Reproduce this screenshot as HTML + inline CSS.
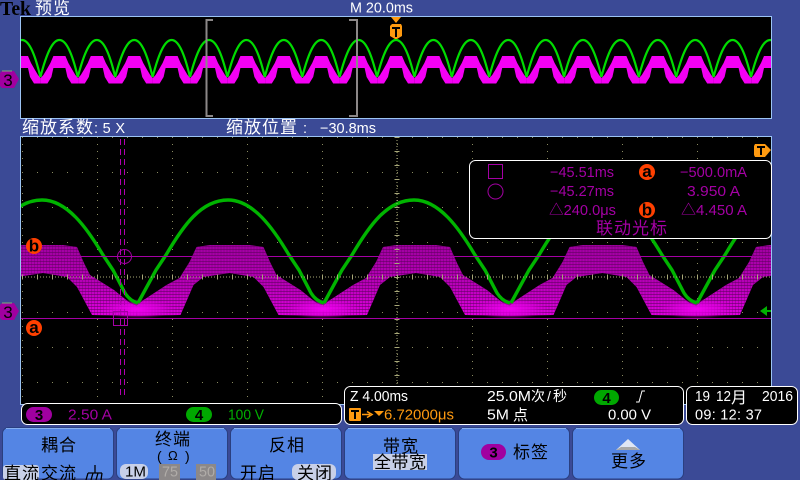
<!DOCTYPE html>
<html><head><meta charset="utf-8"><style>
html,body{margin:0;padding:0;background:#3b4a96;width:800px;height:480px;overflow:hidden}
svg{display:block}
text{font-family:"Liberation Sans","WenQuanYi Zen Hei","Noto Sans CJK SC",sans-serif;font-size:14.5px}
.w{fill:#fff}.p{fill:#a400a4}.k{fill:#000}.o{fill:#ff9a10}.g{fill:#00b000}
.c{font-size:17px;fill:#000}
.cw{font-size:17px;fill:#fff}
.n{font-size:15px;fill:#000}
.m{font-size:17px;fill:#000;font-weight:bold}
</style></head><body>
<svg width="800" height="480" viewBox="0 0 800 480" xmlns="http://www.w3.org/2000/svg">
<defs>
<pattern id="mp" width="3" height="3" patternUnits="userSpaceOnUse">
<rect width="3" height="1" fill="#5a005a" fill-opacity=".55"/><rect width="1" height="3" fill="#5a005a" fill-opacity=".3"/>
</pattern>
<linearGradient id="mg" gradientUnits="userSpaceOnUse" x1="0" y1="245" x2="0" y2="316">
<stop offset="0" stop-color="#a000a0"/><stop offset=".55" stop-color="#b800b8"/><stop offset="1" stop-color="#e000e0"/>
</linearGradient>
<pattern id="gd" x="22" y="137" width="15" height="35" patternUnits="userSpaceOnUse">
<rect width="1" height="1" fill="#8a8a60"/>
</pattern>
<pattern id="gv" x="22" y="137" width="75" height="7" patternUnits="userSpaceOnUse">
<rect width="1" height="1" fill="#8a8a60"/>
</pattern>
<radialGradient id="glow"><stop offset="0" stop-color="#f400f4"/><stop offset=".6" stop-color="#e000e0" stop-opacity=".6"/><stop offset="1" stop-color="#d000d0" stop-opacity="0"/></radialGradient>
<clipPath id="cm"><rect x="21" y="137" width="750" height="266"/></clipPath>
<clipPath id="co"><rect x="21" y="17" width="750" height="101"/></clipPath>
<path id="hump" d="M-93,306 L-86,300 -63,285 -50,278 -40,262 -33,247 -20,245 20,245 34,247 41,263 47,275 71,290 87,303 94,306 94,316 49,315 34,287 24,277 0,273 -26,277 -36,285 -49,315 -93,316Z"/>
<path id="ohump" d="M-18.7,78 L-16,75 -13,70 -9,63 -6,56 6,56 9,63 13,70 16,75 18.7,78 18.7,83.5 12,83.5 8,77 6,68 -6,68 -8,77 -12,83.5 -18.7,83.5Z" fill="#f400f4"/>
<path id="oarc" d="M-19,77 C-12,50 -6,40 0,40 C6,40 12,50 18.4,77" fill="none" stroke="#00dc00" stroke-width="2.2"/>
<path id="arc" d="M-90,303 L-72,270 -62,255 C-45,226 -27,200 0,200 C25,200 45,228 61,255 L71,270 83,293 Q88,301 96,303" fill="none" stroke="#00b400" stroke-width="3.4"/>
<rect id="btn" width="111" height="51.5" rx="6" fill="#5485e4" stroke="#2a3f80"/>
</defs>

<rect width="800" height="480" fill="#3b4a96"/>

<!-- overview -->
<rect x="20.5" y="16.5" width="751" height="102" fill="#000" stroke="#9cc4f4"/>
<g clip-path="url(#co)">
<use href="#ohump" x="22"/><use href="#ohump" x="59.4"/><use href="#ohump" x="96.8"/><use href="#ohump" x="134.2"/><use href="#ohump" x="171.6"/><use href="#ohump" x="209"/><use href="#ohump" x="246.4"/><use href="#ohump" x="283.8"/><use href="#ohump" x="321.2"/><use href="#ohump" x="358.6"/><use href="#ohump" x="396"/><use href="#ohump" x="433.4"/><use href="#ohump" x="470.8"/><use href="#ohump" x="508.2"/><use href="#ohump" x="545.6"/><use href="#ohump" x="583"/><use href="#ohump" x="620.4"/><use href="#ohump" x="657.8"/><use href="#ohump" x="695.2"/><use href="#ohump" x="732.6"/><use href="#ohump" x="770"/>
<use href="#oarc" x="22"/><use href="#oarc" x="59.4"/><use href="#oarc" x="96.8"/><use href="#oarc" x="134.2"/><use href="#oarc" x="171.6"/><use href="#oarc" x="209"/><use href="#oarc" x="246.4"/><use href="#oarc" x="283.8"/><use href="#oarc" x="321.2"/><use href="#oarc" x="358.6"/><use href="#oarc" x="396"/><use href="#oarc" x="433.4"/><use href="#oarc" x="470.8"/><use href="#oarc" x="508.2"/><use href="#oarc" x="545.6"/><use href="#oarc" x="583"/><use href="#oarc" x="620.4"/><use href="#oarc" x="657.8"/><use href="#oarc" x="695.2"/><use href="#oarc" x="732.6"/><use href="#oarc" x="770"/>
</g>
<path d="M213,20H206.5V116H213M349,20H357V116H349" fill="none" stroke="#8c8888" stroke-width="2"/>
<path d="M391,17H401L396,23Z" fill="#ff9a10"/>
<path d="M392,24H401L402,26V36L397,39H395L390,36V26Z" fill="#ff9a10"/>
<path d="M392,27H400V29H397V37H395V29H392Z" fill="#000"/>

<!-- main screen -->
<rect x="20.5" y="136.5" width="751" height="268" fill="#000" stroke="#9cc4f4"/>
<rect x="22" y="137" width="749" height="266" fill="url(#gd)"/>
<rect x="22" y="137" width="749" height="266" fill="url(#gv)"/>
<g clip-path="url(#cm)">
<g fill="url(#mg)"><use href="#hump" x="43"/><use href="#hump" x="229.5"/><use href="#hump" x="416"/><use href="#hump" x="602.5"/><use href="#hump" x="789"/></g>
<g fill="url(#mp)"><use href="#hump" x="43"/><use href="#hump" x="229.5"/><use href="#hump" x="416"/><use href="#hump" x="602.5"/><use href="#hump" x="789"/></g>
<ellipse cx="137" cy="309" rx="38" ry="10" fill="url(#glow)"/><ellipse cx="323" cy="309" rx="38" ry="10" fill="url(#glow)"/><ellipse cx="510" cy="309" rx="38" ry="10" fill="url(#glow)"/><ellipse cx="697" cy="309" rx="38" ry="10" fill="url(#glow)"/>
<use href="#arc" x="42"/><use href="#arc" x="228"/><use href="#arc" x="414"/><use href="#arc" x="601"/><use href="#arc" x="787"/><use href="#arc" x="-144"/>
</g>
<path d="M397,137V403" stroke="#a8a878" stroke-dasharray="1 2"/>
<path d="M22,277H771" stroke="#a8a878" stroke-dasharray="1 2"/>
<path d="M22,277H771" stroke="#a8a878" stroke-width="5" stroke-dasharray="1 14"/>
<path d="M397,137V403" stroke="#a8a878" stroke-width="5" stroke-dasharray="1 13"/>
<path d="M21,256.5H771M21,318.5H771" stroke="#a400a4" stroke-width="1"/>
<path d="M120.5,139V399M124.5,139V399" stroke="#b000b0" stroke-dasharray="6 4"/>
<circle cx="124.5" cy="256.5" r="7" fill="none" stroke="#a400a4"/>
<rect x="113.5" y="311.5" width="14" height="14" fill="none" stroke="#a400a4"/>
<path d="M760,311L767,306V310H771V312H767V316Z" fill="#00b000"/>
<circle cx="34" cy="246" r="8" fill="#ff4000"/><text x="34" y="251.5" text-anchor="middle" class="m">b</text>
<circle cx="34" cy="328" r="8" fill="#ff4000"/><text x="34" y="333" text-anchor="middle" class="m">a</text>
<path d="M755,144H765L771,150L765,157H755L754,155V146Z" fill="#ff9a10"/>
<path d="M757,146H765V148H762V155H760V148H757Z" fill="#000"/>

<!-- channel markers -->
<path d="M2,71H14L19,79L14,88H2L0,86V73Z" fill="#a000a0"/><path d="M2,71H12" stroke="#7ab07a"/><text x="8" y="86" text-anchor="middle" style="font-size:17px" class="k">3</text>
<path d="M2,303H14L19,311L14,320H2L0,318V305Z" fill="#a000a0"/><path d="M2,303H12" stroke="#7ab07a"/><text x="8" y="318" text-anchor="middle" style="font-size:17px" class="k">3</text>

<!-- top text -->
<text x="0" y="15" textLength="31" lengthAdjust="spacingAndGlyphs" style="font:bold 20px 'Liberation Serif',serif" fill="#000">Tek</text>
<text x="35" y="14" textLength="35" class="cw">预览</text>
<text x="350" y="12.5" textLength="63" lengthAdjust="spacingAndGlyphs" class="w">M 20.0ms</text>
<text x="22" y="133" textLength="71" class="cw">缩放系数</text>
<text x="94" y="133" textLength="31" lengthAdjust="spacing" class="w">: 5 X</text>
<text x="226" y="133" textLength="71" class="cw">缩放位置</text>
<text x="303" y="133" class="w">:</text>
<text x="320" y="133" textLength="56" lengthAdjust="spacingAndGlyphs" class="w">−30.8ms</text>

<!-- cursor panel -->
<rect x="469.5" y="160.5" width="302" height="78" rx="6" fill="#000" stroke="#fff"/>
<rect x="488.5" y="164.5" width="14" height="14" fill="none" stroke="#a400a4"/>
<circle cx="495.5" cy="191.5" r="7.5" fill="none" stroke="#a400a4"/>
<text x="550" y="177" textLength="64" lengthAdjust="spacingAndGlyphs" class="p">−45.51ms</text>
<text x="550" y="196" textLength="64" lengthAdjust="spacingAndGlyphs" class="p">−45.27ms</text>
<text x="549" y="215" textLength="67" lengthAdjust="spacingAndGlyphs" class="p">△240.0μs</text>
<text x="680" y="177" textLength="67" lengthAdjust="spacingAndGlyphs" class="p">−500.0mA</text>
<text x="687" y="196" textLength="53" lengthAdjust="spacingAndGlyphs" class="p">3.950 A</text>
<text x="681" y="215" textLength="66" lengthAdjust="spacingAndGlyphs" class="p">△4.450 A</text>
<text x="596" y="234" textLength="71" class="p" style="font-size:17px">联动光标</text>
<circle cx="647" cy="172" r="8" fill="#ff4000"/><text x="647" y="177" text-anchor="middle" class="m">a</text>
<circle cx="647" cy="210" r="8" fill="#ff4000"/><text x="647" y="215.5" text-anchor="middle" class="m">b</text>

<!-- readouts -->
<rect x="21.5" y="403.5" width="320" height="21" rx="6" fill="#000" stroke="#fff"/>
<rect x="26" y="407" width="26" height="15" rx="7.5" fill="#a000a0"/><text x="39" y="420" text-anchor="middle" class="n" font-weight="bold">3</text>
<text x="68" y="419.5" textLength="44" lengthAdjust="spacingAndGlyphs" class="p">2.50 A</text>
<rect x="186" y="407" width="26" height="15" rx="7.5" fill="#00a800"/><text x="199" y="420" text-anchor="middle" class="n" font-weight="bold">4</text>
<text x="228" y="419.5" textLength="36" lengthAdjust="spacingAndGlyphs" class="g">100 V</text>

<rect x="344.5" y="386.5" width="339" height="38" rx="6" fill="#000" stroke="#fff"/>
<text x="350" y="401" textLength="58" lengthAdjust="spacingAndGlyphs" class="w">Z 4.00ms</text>
<rect x="349" y="408" width="12" height="13" rx="1" fill="#ff9a10"/><path d="M351,410H359V412H356V419H354V412H351Z" fill="#000"/>
<path d="M362,414.5H370M367,411.5L372,414.5L367,417.5" fill="none" stroke="#ff9a10" stroke-width="1.6"/>
<path d="M374,411H384L379,416Z" fill="#ff9a10"/>
<text x="384" y="419.5" textLength="70" lengthAdjust="spacingAndGlyphs" class="o">6.72000μs</text>
<text x="487" y="401" textLength="44" lengthAdjust="spacingAndGlyphs" class="w">25.0M</text>
<text x="531" y="401" textLength="36" class="w" style="font-size:14px">次/秒</text>
<text x="487" y="419.5" textLength="22" lengthAdjust="spacingAndGlyphs" class="w">5M</text>
<text x="513" y="420" class="w" style="font-size:15px">点</text>
<rect x="594" y="390" width="25" height="15" rx="7.5" fill="#00a800"/><text x="606.5" y="403" text-anchor="middle" class="n" font-weight="bold">4</text>
<path d="M636,402H639L642,391H645" fill="none" stroke="#fff"/>
<text x="608" y="419.5" textLength="43" lengthAdjust="spacingAndGlyphs" class="w">0.00 V</text>

<rect x="686.5" y="386.5" width="111" height="38" rx="6" fill="#000" stroke="#fff"/>
<text x="695" y="401" textLength="15" lengthAdjust="spacingAndGlyphs" class="w">19</text>
<text x="716" y="401" textLength="15" lengthAdjust="spacingAndGlyphs" class="w">12</text>
<text x="731" y="403" class="w" style="font-size:16px">月</text>
<text x="762" y="401" textLength="31" lengthAdjust="spacingAndGlyphs" class="w">2016</text>
<text x="695" y="419.5" textLength="67" lengthAdjust="spacing" class="w">09: 12: 37</text>

<!-- buttons -->
<use href="#btn" x="2.5" y="427.5"/><use href="#btn" x="116.5" y="427.5"/><use href="#btn" x="230.5" y="427.5"/><use href="#btn" x="344.5" y="427.5"/><use href="#btn" x="458.5" y="427.5"/><use href="#btn" x="572.5" y="427.5"/>
<path d="M6,428.5H110M120,428.5H224M234,428.5H338M348,428.5H452M462,428.5H566M576,428.5H680" stroke="#86aef0"/>

<text x="41" y="451" textLength="35" class="c">耦合</text>
<rect x="3" y="465" width="36" height="15" rx="3" fill="#c8d0e8"/>
<text x="4" y="479" textLength="35" class="c">直流</text>
<text x="41" y="479" textLength="35" class="c">交流</text>
<path d="M95,465V473M88,473H102M88,473L86,480M93,473L91,480M98,473L96,480M102,473L101,480" fill="none" stroke="#000" stroke-width="1.3"/>

<text x="155" y="445" textLength="35" class="c">终端</text>
<text x="157" y="461" class="k" style="font-size:14px">(</text>
<text x="168" y="460" class="k" style="font-size:13px">Ω</text>
<text x="185" y="461" class="k" style="font-size:14px">)</text>
<rect x="120" y="464" width="28" height="15" rx="6" fill="#c8d0e8"/>
<text x="125" y="476.5" textLength="21" lengthAdjust="spacingAndGlyphs" class="k">1M</text>
<rect x="159" y="464" width="21" height="16" fill="#8c8888"/><text x="162" y="476.5" textLength="16" lengthAdjust="spacingAndGlyphs" fill="#b0aca8">75</text>
<rect x="196" y="464" width="20" height="16" fill="#8c8888"/><text x="199" y="476.5" textLength="16" lengthAdjust="spacingAndGlyphs" fill="#b0aca8">50</text>

<text x="269" y="451" textLength="35" class="c">反相</text>
<text x="240" y="479" textLength="35" class="c">开启</text>
<rect x="292" y="464" width="44" height="16" rx="6" fill="#c8d0e8"/>
<text x="297" y="479" textLength="35" class="c">关闭</text>

<text x="383" y="452" textLength="35" class="c">带宽</text>
<rect x="373" y="454" width="54" height="16" fill="#c8d0e8"/>
<text x="374" y="468" textLength="52" class="c">全带宽</text>

<rect x="481" y="444" width="25" height="16" rx="8" fill="#a000a0"/><text x="493.5" y="457.5" text-anchor="middle" class="n" font-weight="bold">3</text>
<text x="513" y="458" textLength="35" class="c">标签</text>

<path d="M628,439L640,450H616Z" fill="#dfe6f4"/>
<path d="M621,447H635L640,450H616Z" fill="#a8a8a8"/>
<text x="611" y="467" textLength="35" class="c">更多</text>
</svg>
</body></html>
